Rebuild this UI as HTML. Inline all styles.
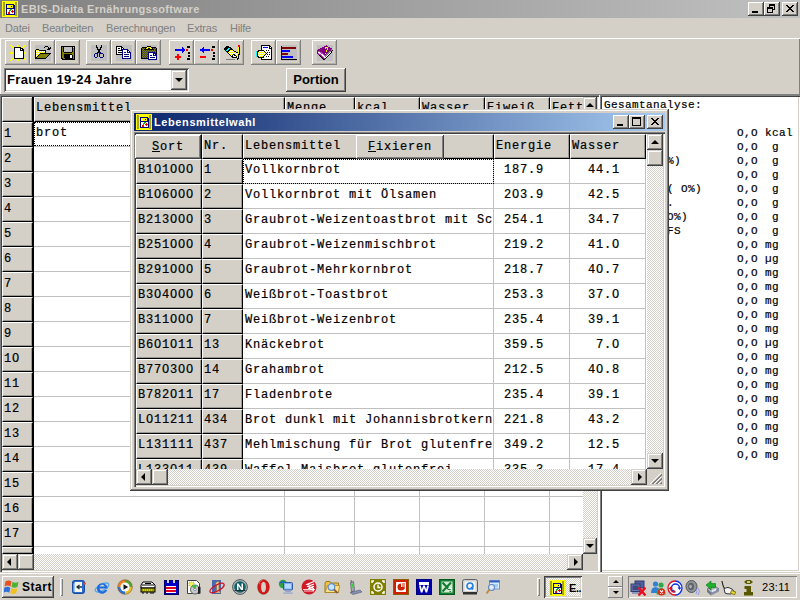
<!DOCTYPE html>
<html><head><meta charset="utf-8">
<style>
*{box-sizing:border-box;margin:0;padding:0}
html,body{width:800px;height:600px;overflow:hidden;background:#d4d0c8;font-family:"Liberation Sans",sans-serif;font-size:11px;color:#000}
.a{position:absolute}
#root{position:relative;width:800px;height:600px;overflow:hidden;background:#d4d0c8}
.m{position:absolute;font-family:"Liberation Mono",monospace;font-size:12px;letter-spacing:0.8px;white-space:pre;line-height:16px;-webkit-text-stroke:0.2px #000}
.m12{position:absolute;font-family:"Liberation Mono",monospace;font-size:11px;white-space:pre;line-height:14px;letter-spacing:0.4px;-webkit-text-stroke:0.2px #000}
.raised{background:#d4d0c8;box-shadow:inset -1px -1px 0 #404040,inset 1px 1px 0 #fff,inset -2px -2px 0 #808080,inset 2px 2px 0 #d4d0c8}
.sunken{box-shadow:inset 1px 1px 0 #808080,inset -1px -1px 0 #fff,inset 2px 2px 0 #404040,inset -2px -2px 0 #d4d0c8}
.tb{position:absolute;top:40px;width:25px;height:25px;background:#d4d0c8;box-shadow:inset -1px -1px 0 #808080,inset 1px 1px 0 #fff,inset -2px -2px 0 #b4b0a8}
.chk{background-color:#fff;background-image:linear-gradient(45deg,#d4d0c8 25%,transparent 25%,transparent 75%,#d4d0c8 75%),linear-gradient(45deg,#d4d0c8 25%,transparent 25%,transparent 75%,#d4d0c8 75%);background-size:2px 2px;background-position:0 0,1px 1px}
.sb{position:absolute;width:16px;height:16px;background:#d4d0c8;box-shadow:inset -1px -1px 0 #404040,inset 1px 1px 0 #d4d0c8,inset -2px -2px 0 #808080,inset 2px 2px 0 #fff}
.fx{position:absolute;background:#d4d0c8;border-top:1px solid #fff;border-left:1px solid #fff;border-bottom:1px solid #000;border-right:1px solid #000;box-shadow:inset -1px -1px 0 #9c9a94}
.hl{position:absolute;height:1px;background:#c0c0c0}
.vl{position:absolute;width:1px;background:#c0c0c0}
.ar{position:absolute;width:0;height:0;border:4px solid transparent}
</style></head><body><div id="root">
<div class="a" style="left:0;top:0;width:800px;height:18px;background:linear-gradient(90deg,#808080,#c0c0c0)"></div>
<div class="a" id="mtitle" style="left:21px;top:3px;font-weight:bold;font-size:11px;color:#d4d0c8;white-space:pre;line-height:13px;letter-spacing:0.31px">EBIS-Diaita Ernährungssoftware</div>
<svg class="a" style="left:2px;top:1px" width="16" height="16" viewBox="0 0 16 16" shape-rendering="crispEdges"><path fill="#ff0" d="M0 0h16v1h-16zM0 1h1v1h-1zM3 1h10v1h-10zM15 1h1v1h-1zM0 2h1v1h-1zM3 2h10v1h-10zM15 2h1v1h-1zM0 3h1v1h-1zM3 3h1v1h-1zM12 3h1v1h-1zM15 3h1v1h-1zM0 4h1v1h-1zM3 4h1v1h-1zM5 4h6v1h-6zM15 4h1v1h-1zM0 5h1v1h-1zM3 5h1v1h-1zM5 5h4v1h-4zM10 5h1v1h-1zM15 5h1v1h-1zM0 6h1v1h-1zM3 6h1v1h-1zM5 6h6v1h-6zM15 6h1v1h-1zM0 7h1v1h-1zM3 7h1v1h-1zM15 7h1v1h-1zM0 8h1v1h-1zM3 8h1v1h-1zM15 8h1v1h-1zM0 9h1v1h-1zM3 9h1v1h-1zM15 9h1v1h-1zM0 10h1v1h-1zM3 10h1v1h-1zM15 10h1v1h-1zM0 11h1v1h-1zM3 11h1v1h-1zM15 11h1v1h-1zM0 12h1v1h-1zM3 12h1v1h-1zM15 12h1v1h-1zM0 13h1v1h-1zM3 13h1v1h-1zM15 13h1v1h-1zM0 14h1v1h-1zM3 14h10v1h-10zM15 14h1v1h-1zM0 15h16v1h-16z"/><path fill="#a4a418" d="M1 1h2v1h-2zM13 1h2v1h-2zM1 2h2v1h-2zM13 2h2v1h-2zM1 3h2v1h-2zM13 3h2v1h-2zM1 4h2v1h-2zM13 4h2v1h-2zM1 5h2v1h-2zM13 5h2v1h-2zM1 6h2v1h-2zM13 6h2v1h-2zM1 7h2v1h-2zM13 7h2v1h-2zM1 8h2v1h-2zM13 8h2v1h-2zM1 9h2v1h-2zM13 9h2v1h-2zM1 10h2v1h-2zM13 10h2v1h-2zM1 11h2v1h-2zM13 11h2v1h-2zM1 12h2v1h-2zM13 12h2v1h-2zM1 13h2v1h-2zM13 13h2v1h-2zM1 14h2v1h-2zM13 14h2v1h-2z"/><path fill="#000080" d="M4 3h8v1h-8zM4 4h1v1h-1zM11 4h2v1h-2zM4 5h1v1h-1zM9 5h1v1h-1zM11 5h2v1h-2zM4 6h1v1h-1zM11 6h2v1h-2zM4 7h9v1h-9zM4 8h1v1h-1zM12 8h1v1h-1zM4 9h1v1h-1zM12 9h1v1h-1zM4 10h1v1h-1zM12 10h1v1h-1zM4 11h1v1h-1zM12 11h1v1h-1zM4 12h1v1h-1zM12 12h1v1h-1zM4 13h9v1h-9z"/><path fill="#fff" d="M5 8h3v1h-3zM10 8h2v1h-2zM5 9h2v1h-2zM9 9h1v1h-1zM11 9h1v1h-1zM5 10h2v1h-2zM8 10h1v1h-1zM5 11h1v1h-1zM8 11h2v1h-2zM11 11h1v1h-1zM5 12h1v1h-1zM8 12h4v1h-4z"/><path fill="#00c000" d="M8 8h2v1h-2zM7 9h2v1h-2zM7 10h1v1h-1z"/><path fill="#f00" d="M10 9h1v1h-1zM9 10h3v1h-3zM6 11h2v1h-2zM10 11h1v1h-1zM6 12h2v1h-2z"/></svg>
<div class="a raised" style="left:748px;top:2px;width:16px;height:14px"></div><div class="a" style="left:752px;top:11px;width:6px;height:2px;background:#000"></div>
<div class="a raised" style="left:764px;top:2px;width:16px;height:14px"></div><div class="a" style="left:769px;top:4px;width:6px;height:6px;border:1px solid #000;border-top-width:2px"></div><div class="a" style="left:767px;top:7px;width:6px;height:6px;border:1px solid #000;border-top-width:2px;background:#d4d0c8"></div>
<div class="a raised" style="left:782px;top:2px;width:16px;height:14px"></div><svg class="a" style="left:786px;top:5px" width="8" height="7" viewBox="0 0 8 7" shape-rendering="crispEdges"><path d="M0 0h2v1h1v1h2v-1h1v-1h2v1h-1v1h-1v1h-1v1h1v1h1v1h1v1h-2v-1h-1v-1h-2v1h-1v1h-2v-1h1v-1h1v-1h1v-1h-1v-1h-1v-1h-1z" fill="#000"/></svg>
<div class="a" style="left:5px;top:21px;line-height:14px;color:#808080;white-space:pre;font-size:11px;letter-spacing:-0.2px">Datei</div>
<div class="a" style="left:42px;top:21px;line-height:14px;color:#808080;white-space:pre;font-size:11px;letter-spacing:-0.2px">Bearbeiten</div>
<div class="a" style="left:106px;top:21px;line-height:14px;color:#808080;white-space:pre;font-size:11px;letter-spacing:-0.2px">Berechnungen</div>
<div class="a" style="left:187px;top:21px;line-height:14px;color:#808080;white-space:pre;font-size:11px;letter-spacing:-0.2px">Extras</div>
<div class="a" style="left:230px;top:21px;line-height:14px;color:#808080;white-space:pre;font-size:11px;letter-spacing:-0.2px">Hilfe</div>
<div class="a" style="left:0;top:38px;width:800px;height:1px;background:#fff"></div>
<div class="a" style="left:0;top:38px;width:1px;height:56px;background:#fff"></div>
<div class="tb" style="left:5px"></div>
<svg class="a" style="left:10px;top:45px" width="16" height="16" viewBox="0 0 16 16" shape-rendering="crispEdges"><path fill="#ff0" d="M0 0h2v1h-2zM7 0h2v1h-2zM14 0h2v1h-2zM1 1h2v1h-2zM7 1h2v1h-2zM13 1h2v1h-2zM2 2h2v1h-2zM12 2h2v1h-2zM3 3h1v1h-1zM0 7h3v1h-3zM14 7h2v1h-2zM0 8h3v1h-3zM14 8h2v1h-2zM2 13h2v1h-2zM14 13h2v1h-2zM1 14h2v1h-2zM7 14h2v1h-2zM14 14h2v1h-2zM0 15h2v1h-2zM7 15h2v1h-2z"/><path fill="#000" d="M4 2h7v1h-7zM4 3h1v1h-1zM10 3h3v1h-3zM4 4h1v1h-1zM10 4h1v1h-1zM12 4h2v1h-2zM4 5h1v1h-1zM10 5h4v1h-4zM4 6h1v1h-1zM13 6h1v1h-1zM4 7h1v1h-1zM13 7h1v1h-1zM4 8h1v1h-1zM13 8h1v1h-1zM4 9h1v1h-1zM13 9h1v1h-1zM4 10h1v1h-1zM13 10h1v1h-1zM4 11h1v1h-1zM13 11h1v1h-1zM4 12h1v1h-1zM13 12h1v1h-1zM4 13h10v1h-10z"/><path fill="#fff" d="M5 3h5v1h-5zM5 4h5v1h-5zM11 4h1v1h-1zM5 5h5v1h-5zM5 6h8v1h-8zM5 7h8v1h-8zM5 8h8v1h-8zM5 9h8v1h-8zM5 10h8v1h-8zM5 11h8v1h-8zM5 12h8v1h-8z"/></svg>
<div class="tb" style="left:30px"></div>
<svg class="a" style="left:35px;top:45px" width="16" height="16" viewBox="0 0 16 16" shape-rendering="crispEdges"><path fill="#c0c0c0" d="M0 0h16v1h-16zM0 1h10v1h-10zM13 1h3v1h-3zM0 2h9v1h-9zM10 2h3v1h-3zM14 2h1v1h-1zM0 3h13v1h-13zM0 4h1v1h-1zM4 4h8v1h-8zM15 4h1v1h-1zM11 5h5v1h-5zM11 6h5v1h-5zM11 7h5v1h-5zM15 9h1v1h-1zM14 10h2v1h-2zM13 11h3v1h-3zM12 12h4v1h-4zM11 13h5v1h-5zM0 14h16v1h-16zM0 15h16v1h-16z"/><path fill="#000" d="M10 1h3v1h-3zM9 2h1v1h-1zM13 2h1v1h-1zM15 2h1v1h-1zM13 3h3v1h-3zM1 4h3v1h-3zM12 4h3v1h-3zM0 5h1v1h-1zM4 5h7v1h-7zM0 6h1v1h-1zM10 6h1v1h-1zM0 7h1v1h-1zM10 7h1v1h-1zM0 8h1v1h-1zM5 8h11v1h-11zM0 9h1v1h-1zM4 9h1v1h-1zM14 9h1v1h-1zM0 10h1v1h-1zM3 10h1v1h-1zM13 10h1v1h-1zM0 11h1v1h-1zM2 11h1v1h-1zM12 11h1v1h-1zM0 12h2v1h-2zM11 12h1v1h-1zM0 13h11v1h-11z"/><path fill="#ff0" d="M1 5h1v1h-1zM3 5h1v1h-1zM2 6h1v1h-1zM4 6h1v1h-1zM6 6h1v1h-1zM8 6h1v1h-1zM1 7h1v1h-1zM3 7h1v1h-1zM5 7h1v1h-1zM7 7h1v1h-1zM9 7h1v1h-1zM2 8h1v1h-1zM4 8h1v1h-1zM1 9h1v1h-1zM3 9h1v1h-1zM2 10h1v1h-1zM1 11h1v1h-1z"/><path fill="#fff" d="M2 5h1v1h-1zM1 6h1v1h-1zM3 6h1v1h-1zM5 6h1v1h-1zM7 6h1v1h-1zM9 6h1v1h-1zM2 7h1v1h-1zM4 7h1v1h-1zM6 7h1v1h-1zM8 7h1v1h-1zM1 8h1v1h-1zM3 8h1v1h-1zM2 9h1v1h-1zM1 10h1v1h-1z"/><path fill="#808000" d="M5 9h9v1h-9zM4 10h9v1h-9zM3 11h9v1h-9zM2 12h9v1h-9z"/></svg>
<div class="tb" style="left:55px"></div>
<svg class="a" style="left:60px;top:45px" width="16" height="16" viewBox="0 0 16 16" shape-rendering="crispEdges"><path fill="#000" d="M1 1h14v1h-14zM1 2h1v1h-1zM3 2h1v1h-1zM12 2h1v1h-1zM14 2h1v1h-1zM1 3h1v1h-1zM3 3h1v1h-1zM12 3h1v1h-1zM14 3h1v1h-1zM1 4h1v1h-1zM3 4h1v1h-1zM12 4h1v1h-1zM14 4h1v1h-1zM1 5h1v1h-1zM3 5h1v1h-1zM12 5h1v1h-1zM14 5h1v1h-1zM1 6h1v1h-1zM3 6h1v1h-1zM12 6h1v1h-1zM14 6h1v1h-1zM1 7h1v1h-1zM4 7h8v1h-8zM14 7h1v1h-1zM1 8h1v1h-1zM14 8h1v1h-1zM1 9h1v1h-1zM4 9h8v1h-8zM14 9h1v1h-1zM1 10h1v1h-1zM4 10h6v1h-6zM12 10h1v1h-1zM14 10h1v1h-1zM1 11h1v1h-1zM4 11h6v1h-6zM12 11h1v1h-1zM14 11h1v1h-1zM1 12h1v1h-1zM4 12h6v1h-6zM12 12h1v1h-1zM14 12h1v1h-1zM1 13h2v1h-2zM5 13h8v1h-8zM14 13h1v1h-1zM2 14h13v1h-13z"/><path fill="#808000" d="M2 2h1v1h-1zM2 3h1v1h-1zM13 3h1v1h-1zM2 4h1v1h-1zM13 4h1v1h-1zM2 5h1v1h-1zM13 5h1v1h-1zM2 6h1v1h-1zM13 6h1v1h-1zM2 7h2v1h-2zM12 7h2v1h-2zM2 8h12v1h-12zM2 9h2v1h-2zM12 9h2v1h-2zM2 10h2v1h-2zM13 10h1v1h-1zM2 11h2v1h-2zM13 11h1v1h-1zM2 12h2v1h-2zM13 12h1v1h-1zM3 13h2v1h-2zM13 13h1v1h-1z"/><path fill="#c0c0c0" d="M4 2h8v1h-8zM13 2h1v1h-1zM4 3h8v1h-8zM4 4h8v1h-8zM4 5h8v1h-8zM4 6h8v1h-8z"/><path fill="#fff" d="M10 10h2v1h-2zM10 11h2v1h-2zM10 12h2v1h-2z"/></svg>
<div class="tb" style="left:86px"></div>
<svg class="a" style="left:91px;top:45px" width="16" height="16" viewBox="0 0 16 16" shape-rendering="crispEdges"><path fill="#c0c0c0" d="M0 0h5v1h-5zM6 0h4v1h-4zM11 0h5v1h-5zM0 1h5v1h-5zM6 1h4v1h-4zM11 1h5v1h-5zM0 2h5v1h-5zM7 2h2v1h-2zM11 2h5v1h-5zM0 3h6v1h-6zM7 3h2v1h-2zM10 3h6v1h-6zM0 4h6v1h-6zM10 4h6v1h-6zM0 5h7v1h-7zM9 5h7v1h-7zM0 6h7v1h-7zM9 6h7v1h-7zM0 7h6v1h-6zM10 7h6v1h-6zM0 8h4v1h-4zM7 8h1v1h-1zM12 8h4v1h-4zM0 9h3v1h-3zM4 9h2v1h-2zM7 9h1v1h-1zM9 9h3v1h-3zM13 9h3v1h-3zM0 10h3v1h-3zM4 10h2v1h-2zM7 10h1v1h-1zM9 10h3v1h-3zM13 10h3v1h-3zM0 11h3v1h-3zM4 11h2v1h-2zM7 11h1v1h-1zM9 11h3v1h-3zM13 11h3v1h-3zM0 12h4v1h-4zM6 12h3v1h-3zM12 12h4v1h-4zM0 13h16v1h-16zM0 14h16v1h-16zM0 15h16v1h-16z"/><path fill="#000" d="M5 0h1v1h-1zM10 0h1v1h-1zM5 1h1v1h-1zM10 1h1v1h-1zM5 2h2v1h-2zM9 2h2v1h-2zM6 3h1v1h-1zM9 3h1v1h-1zM6 4h4v1h-4zM7 5h2v1h-2zM7 6h2v1h-2zM7 7h1v1h-1z"/><path fill="#000080" d="M6 7h1v1h-1zM8 7h2v1h-2zM4 8h3v1h-3zM8 8h4v1h-4zM3 9h1v1h-1zM6 9h1v1h-1zM8 9h1v1h-1zM12 9h1v1h-1zM3 10h1v1h-1zM6 10h1v1h-1zM8 10h1v1h-1zM12 10h1v1h-1zM3 11h1v1h-1zM6 11h1v1h-1zM8 11h1v1h-1zM12 11h1v1h-1zM4 12h2v1h-2zM9 12h3v1h-3z"/></svg>
<div class="tb" style="left:111px"></div>
<svg class="a" style="left:116px;top:45px" width="16" height="16" viewBox="0 0 16 16" shape-rendering="crispEdges"><path fill="#c0c0c0" d="M0 0h16v1h-16zM6 1h10v1h-10zM7 2h9v1h-9zM8 3h8v1h-8zM12 4h4v1h-4zM13 5h3v1h-3zM14 6h2v1h-2zM15 7h1v1h-1zM15 8h1v1h-1zM15 9h1v1h-1zM0 10h6v1h-6zM15 10h1v1h-1zM0 11h6v1h-6zM15 11h1v1h-1zM0 12h6v1h-6zM15 12h1v1h-1zM0 13h6v1h-6zM15 13h1v1h-1zM0 14h16v1h-16zM0 15h16v1h-16z"/><path fill="#000" d="M0 1h6v1h-6zM0 2h1v1h-1zM5 2h2v1h-2zM0 3h1v1h-1zM2 3h2v1h-2zM5 3h1v1h-1zM7 3h1v1h-1zM0 4h1v1h-1zM5 4h1v1h-1zM0 5h1v1h-1zM2 5h4v1h-4zM0 6h1v1h-1zM0 7h1v1h-1zM2 7h4v1h-4zM0 8h1v1h-1zM0 9h6v1h-6z"/><path fill="#fff" d="M1 2h4v1h-4zM1 3h1v1h-1zM4 3h1v1h-1zM6 3h1v1h-1zM1 4h4v1h-4zM1 5h1v1h-1zM7 5h4v1h-4zM1 6h5v1h-5zM7 6h4v1h-4zM12 6h1v1h-1zM1 7h1v1h-1zM7 7h1v1h-1zM10 7h1v1h-1zM1 8h5v1h-5zM7 8h7v1h-7zM7 9h1v1h-1zM13 9h1v1h-1zM7 10h7v1h-7zM7 11h1v1h-1zM13 11h1v1h-1zM7 12h7v1h-7z"/><path fill="#000080" d="M6 4h6v1h-6zM6 5h1v1h-1zM11 5h2v1h-2zM6 6h1v1h-1zM11 6h1v1h-1zM13 6h1v1h-1zM6 7h1v1h-1zM8 7h2v1h-2zM11 7h4v1h-4zM6 8h1v1h-1zM14 8h1v1h-1zM6 9h1v1h-1zM8 9h5v1h-5zM14 9h1v1h-1zM6 10h1v1h-1zM14 10h1v1h-1zM6 11h1v1h-1zM8 11h5v1h-5zM14 11h1v1h-1zM6 12h1v1h-1zM14 12h1v1h-1zM6 13h9v1h-9z"/></svg>
<div class="tb" style="left:136px"></div>
<svg class="a" style="left:141px;top:45px" width="16" height="16" viewBox="0 0 16 16" shape-rendering="crispEdges"><path fill="#c0c0c0" d="M0 0h16v1h-16zM0 1h6v1h-6zM10 1h6v1h-6zM0 2h1v1h-1zM15 2h1v1h-1zM0 14h7v1h-7zM0 15h16v1h-16z"/><path fill="#000" d="M6 1h4v1h-4zM1 2h5v1h-5zM10 2h5v1h-5zM0 3h1v1h-1zM4 3h1v1h-1zM7 3h2v1h-2zM11 3h1v1h-1zM15 3h1v1h-1zM0 4h1v1h-1zM3 4h10v1h-10zM15 4h1v1h-1zM0 5h1v1h-1zM15 5h1v1h-1zM0 6h1v1h-1zM15 6h1v1h-1zM0 7h1v1h-1zM15 7h1v1h-1zM0 8h1v1h-1zM15 8h1v1h-1zM0 9h1v1h-1zM0 10h1v1h-1zM0 11h1v1h-1zM0 12h1v1h-1zM0 13h7v1h-7z"/><path fill="#ff0" d="M6 2h4v1h-4zM5 3h2v1h-2zM9 3h2v1h-2z"/><path fill="#808000" d="M1 3h1v1h-1zM3 3h1v1h-1zM12 3h1v1h-1zM14 3h1v1h-1zM2 4h1v1h-1zM13 4h1v1h-1zM1 5h1v1h-1zM3 5h1v1h-1zM5 5h1v1h-1zM7 5h1v1h-1zM9 5h1v1h-1zM11 5h1v1h-1zM13 5h1v1h-1zM2 6h1v1h-1zM4 6h1v1h-1zM6 6h1v1h-1zM8 6h1v1h-1zM10 6h1v1h-1zM12 6h1v1h-1zM14 6h1v1h-1zM1 7h1v1h-1zM3 7h1v1h-1zM5 7h1v1h-1zM2 8h1v1h-1zM4 8h1v1h-1zM6 8h1v1h-1zM1 9h1v1h-1zM3 9h1v1h-1zM5 9h1v1h-1zM2 10h1v1h-1zM4 10h1v1h-1zM6 10h1v1h-1zM1 11h1v1h-1zM3 11h1v1h-1zM5 11h1v1h-1zM2 12h1v1h-1zM4 12h1v1h-1zM6 12h1v1h-1z"/><path fill="#404040" d="M2 3h1v1h-1zM13 3h1v1h-1zM1 4h1v1h-1zM14 4h1v1h-1zM2 5h1v1h-1zM4 5h1v1h-1zM6 5h1v1h-1zM8 5h1v1h-1zM10 5h1v1h-1zM12 5h1v1h-1zM14 5h1v1h-1zM1 6h1v1h-1zM3 6h1v1h-1zM5 6h1v1h-1zM7 6h1v1h-1zM9 6h1v1h-1zM11 6h1v1h-1zM13 6h1v1h-1zM2 7h1v1h-1zM4 7h1v1h-1zM6 7h1v1h-1zM14 7h1v1h-1zM1 8h1v1h-1zM3 8h1v1h-1zM5 8h1v1h-1zM2 9h1v1h-1zM4 9h1v1h-1zM6 9h1v1h-1zM1 10h1v1h-1zM3 10h1v1h-1zM5 10h1v1h-1zM2 11h1v1h-1zM4 11h1v1h-1zM6 11h1v1h-1zM1 12h1v1h-1zM3 12h1v1h-1zM5 12h1v1h-1z"/><path fill="#000080" d="M7 7h7v1h-7zM7 8h1v1h-1zM12 8h3v1h-3zM7 9h1v1h-1zM12 9h1v1h-1zM14 9h2v1h-2zM7 10h1v1h-1zM9 10h2v1h-2zM12 10h4v1h-4zM7 11h1v1h-1zM15 11h1v1h-1zM7 12h1v1h-1zM9 12h5v1h-5zM15 12h1v1h-1zM7 13h1v1h-1zM15 13h1v1h-1zM7 14h9v1h-9z"/><path fill="#fff" d="M8 8h4v1h-4zM8 9h4v1h-4zM13 9h1v1h-1zM8 10h1v1h-1zM11 10h1v1h-1zM8 11h7v1h-7zM8 12h1v1h-1zM14 12h1v1h-1zM8 13h7v1h-7z"/></svg>
<div class="tb" style="left:169px"></div>
<svg class="a" style="left:174px;top:45px" width="16" height="16" viewBox="0 0 16 16" shape-rendering="crispEdges"><path fill="#000" d="M13 1h3v1h-3zM13 2h3v1h-3zM14 7h2v1h-2zM14 8h2v1h-2zM14 10h2v1h-2zM14 11h2v1h-2zM13 13h3v1h-3zM13 14h3v1h-3z"/><path fill="#00f" d="M8 2h1v1h-1zM8 3h2v1h-2zM1 4h10v1h-10zM1 5h10v1h-10zM8 6h2v1h-2zM8 7h1v1h-1z"/><path fill="#f00" d="M12 4h2v1h-2zM12 5h2v1h-2zM3 9h2v1h-2zM3 10h2v1h-2zM1 11h6v1h-6zM1 12h6v1h-6zM3 13h2v1h-2zM3 14h2v1h-2z"/></svg>
<div class="tb" style="left:194px"></div>
<svg class="a" style="left:199px;top:45px" width="16" height="16" viewBox="0 0 16 16" shape-rendering="crispEdges"><path fill="#000" d="M13 1h3v1h-3zM13 2h3v1h-3zM14 7h2v1h-2zM14 8h2v1h-2zM14 10h2v1h-2zM14 11h2v1h-2zM13 13h3v1h-3zM13 14h3v1h-3z"/><path fill="#00f" d="M4 2h1v1h-1zM3 3h2v1h-2zM1 4h10v1h-10zM1 5h10v1h-10zM3 6h2v1h-2zM4 7h1v1h-1z"/><path fill="#f00" d="M12 4h2v1h-2zM12 5h2v1h-2zM1 11h6v1h-6zM1 12h6v1h-6z"/></svg>
<div class="tb" style="left:219px"></div>
<svg class="a" style="left:224px;top:45px" width="16" height="16" viewBox="0 0 16 16" shape-rendering="crispEdges"><path fill="#f00" d="M14 0h2v1h-2zM14 1h2v1h-2z"/><path fill="#000" d="M2 1h3v1h-3zM1 2h6v1h-6zM15 2h1v1h-1zM0 3h4v1h-4zM6 3h2v1h-2zM15 3h1v1h-1zM0 4h3v1h-3zM5 4h4v1h-4zM15 4h1v1h-1zM1 5h1v1h-1zM4 5h2v1h-2zM9 5h1v1h-1zM15 5h1v1h-1zM2 6h3v1h-3zM10 6h2v1h-2zM15 6h1v1h-1zM3 7h1v1h-1zM12 7h2v1h-2zM15 7h1v1h-1zM4 8h1v1h-1zM15 8h1v1h-1zM5 9h1v1h-1zM9 9h2v1h-2zM14 9h2v1h-2zM6 10h1v1h-1zM8 10h1v1h-1zM10 10h2v1h-2zM14 10h1v1h-1zM7 11h2v1h-2zM12 11h1v1h-1zM14 11h1v1h-1zM8 12h5v1h-5zM14 12h1v1h-1zM13 13h2v1h-2zM13 14h1v1h-1z"/><path fill="#ff0" d="M14 2h1v1h-1zM14 3h1v1h-1zM14 4h1v1h-1zM6 5h1v1h-1zM8 5h1v1h-1zM14 5h1v1h-1zM5 6h1v1h-1zM7 6h1v1h-1zM9 6h1v1h-1zM14 6h1v1h-1zM4 7h1v1h-1zM6 7h1v1h-1zM8 7h1v1h-1zM10 7h2v1h-2zM14 7h1v1h-1zM5 8h1v1h-1zM7 8h1v1h-1zM9 8h1v1h-1zM11 8h1v1h-1zM13 8h2v1h-2zM6 9h1v1h-1zM8 9h1v1h-1zM11 9h1v1h-1zM13 9h1v1h-1zM7 10h1v1h-1zM12 10h2v1h-2zM9 11h1v1h-1zM13 11h1v1h-1zM13 12h1v1h-1z"/><path fill="#0ff" d="M4 3h2v1h-2zM3 4h2v1h-2zM2 5h2v1h-2z"/><path fill="#fff" d="M7 5h1v1h-1zM6 6h1v1h-1zM8 6h1v1h-1zM5 7h1v1h-1zM7 7h1v1h-1zM9 7h1v1h-1zM6 8h1v1h-1zM8 8h1v1h-1zM10 8h1v1h-1zM12 8h1v1h-1zM7 9h1v1h-1zM12 9h1v1h-1zM9 10h1v1h-1zM10 11h2v1h-2z"/><path fill="#808080" d="M2 14h9v1h-9z"/></svg>
<div class="tb" style="left:251px"></div>
<svg class="a" style="left:256px;top:45px" width="16" height="16" viewBox="0 0 16 16" shape-rendering="crispEdges"><path fill="#000" d="M5 0h9v1h-9zM5 1h1v1h-1zM13 1h2v1h-2zM5 2h1v1h-1zM13 2h1v1h-1zM15 2h1v1h-1zM5 3h1v1h-1zM13 3h3v1h-3zM5 4h1v1h-1zM15 4h1v1h-1zM2 5h6v1h-6zM10 5h1v1h-1zM12 5h1v1h-1zM15 5h1v1h-1zM1 6h2v1h-2zM8 6h1v1h-1zM15 6h1v1h-1zM1 7h1v1h-1zM9 7h1v1h-1zM11 7h1v1h-1zM13 7h1v1h-1zM15 7h1v1h-1zM1 8h1v1h-1zM10 8h1v1h-1zM15 8h1v1h-1zM1 9h1v1h-1zM9 9h1v1h-1zM11 9h1v1h-1zM13 9h1v1h-1zM15 9h1v1h-1zM1 10h1v1h-1zM8 10h1v1h-1zM15 10h1v1h-1zM1 11h2v1h-2zM7 11h1v1h-1zM10 11h1v1h-1zM12 11h1v1h-1zM15 11h1v1h-1zM2 12h6v1h-6zM15 12h1v1h-1zM5 13h1v1h-1zM15 13h1v1h-1zM5 14h11v1h-11z"/><path fill="#fff" d="M6 1h7v1h-7zM6 2h1v1h-1zM12 2h1v1h-1zM14 2h1v1h-1zM6 3h7v1h-7zM6 4h9v1h-9zM8 5h2v1h-2zM11 5h1v1h-1zM13 5h2v1h-2zM4 6h1v1h-1zM6 6h1v1h-1zM9 6h6v1h-6zM3 7h1v1h-1zM5 7h1v1h-1zM7 7h1v1h-1zM10 7h1v1h-1zM12 7h1v1h-1zM14 7h1v1h-1zM2 8h1v1h-1zM4 8h1v1h-1zM6 8h1v1h-1zM8 8h1v1h-1zM11 8h4v1h-4zM3 9h1v1h-1zM5 9h1v1h-1zM7 9h1v1h-1zM10 9h1v1h-1zM12 9h1v1h-1zM14 9h1v1h-1zM2 10h1v1h-1zM4 10h1v1h-1zM6 10h1v1h-1zM9 10h6v1h-6zM3 11h1v1h-1zM5 11h1v1h-1zM8 11h2v1h-2zM11 11h1v1h-1zM13 11h2v1h-2zM8 12h7v1h-7zM6 13h9v1h-9z"/><path fill="#00f" d="M7 2h5v1h-5z"/><path fill="#0ff" d="M0 6h1v1h-1zM0 7h1v1h-1zM0 8h1v1h-1zM0 9h1v1h-1zM0 10h1v1h-1zM0 11h1v1h-1z"/><path fill="#ff0" d="M3 6h1v1h-1zM5 6h1v1h-1zM7 6h1v1h-1zM2 7h1v1h-1zM4 7h1v1h-1zM6 7h1v1h-1zM8 7h1v1h-1zM3 8h1v1h-1zM5 8h1v1h-1zM7 8h1v1h-1zM9 8h1v1h-1zM2 9h1v1h-1zM4 9h1v1h-1zM6 9h1v1h-1zM8 9h1v1h-1zM3 10h1v1h-1zM5 10h1v1h-1zM7 10h1v1h-1zM4 11h1v1h-1zM6 11h1v1h-1z"/></svg>
<div class="tb" style="left:276px"></div>
<svg class="a" style="left:281px;top:45px" width="16" height="16" viewBox="0 0 16 16" shape-rendering="crispEdges"><path fill="#c0c0c0" d="M0 0h16v1h-16zM1 1h15v1h-15zM15 2h1v1h-1zM15 3h1v1h-1zM1 4h15v1h-15zM9 5h7v1h-7zM9 6h7v1h-7zM1 7h15v1h-15zM7 8h9v1h-9zM7 9h9v1h-9zM1 10h15v1h-15zM12 11h4v1h-4zM12 12h4v1h-4zM1 13h15v1h-15zM0 15h16v1h-16z"/><path fill="#000" d="M0 1h1v1h-1zM0 2h1v1h-1zM0 3h1v1h-1zM0 4h1v1h-1zM0 5h1v1h-1zM0 6h1v1h-1zM0 7h1v1h-1zM0 8h1v1h-1zM0 9h1v1h-1zM0 10h1v1h-1zM0 11h1v1h-1zM0 12h1v1h-1zM0 13h1v1h-1zM0 14h16v1h-16z"/><path fill="#800000" d="M1 2h14v1h-14zM1 3h14v1h-14zM1 8h6v1h-6zM1 9h6v1h-6z"/><path fill="#00f" d="M1 5h8v1h-8zM1 6h8v1h-8zM1 11h11v1h-11zM1 12h11v1h-11z"/></svg>
<div class="tb" style="left:312px"></div>
<svg class="a" style="left:317px;top:45px" width="16" height="16" viewBox="0 0 16 16" shape-rendering="crispEdges"><path fill="#c0c0c0" d="M0 0h9v1h-9zM10 0h6v1h-6zM0 1h7v1h-7zM11 1h5v1h-5zM0 2h5v1h-5zM13 2h3v1h-3zM0 3h3v1h-3zM15 3h1v1h-1zM0 4h1v1h-1zM15 4h1v1h-1zM15 6h1v1h-1zM15 7h1v1h-1zM14 8h2v1h-2zM0 9h1v1h-1zM13 9h3v1h-3zM0 10h2v1h-2zM12 10h4v1h-4zM0 11h3v1h-3zM11 11h5v1h-5zM0 12h4v1h-4zM10 12h6v1h-6zM0 13h5v1h-5zM9 13h7v1h-7zM0 14h6v1h-6zM8 14h8v1h-8zM0 15h16v1h-16z"/><path fill="#800080" d="M9 0h1v1h-1zM7 1h4v1h-4zM5 2h3v1h-3zM11 2h2v1h-2zM3 3h5v1h-5zM9 3h1v1h-1zM11 3h4v1h-4zM1 4h9v1h-9zM11 4h3v1h-3zM0 5h9v1h-9zM10 5h4v1h-4zM0 6h1v1h-1zM3 6h6v1h-6zM10 6h2v1h-2zM0 7h1v1h-1zM5 7h6v1h-6zM0 8h1v1h-1zM6 8h2v1h-2zM9 8h1v1h-1zM1 9h1v1h-1zM7 9h2v1h-2zM3 10h1v1h-1zM4 11h1v1h-1zM5 12h1v1h-1zM6 13h1v1h-1z"/><path fill="#ff0" d="M8 2h3v1h-3zM8 3h1v1h-1zM10 3h1v1h-1zM10 4h1v1h-1zM9 5h1v1h-1zM9 6h1v1h-1zM8 8h1v1h-1z"/><path fill="#808080" d="M14 4h1v1h-1zM14 5h1v1h-1zM12 6h2v1h-2zM11 7h2v1h-2zM10 8h2v1h-2zM9 9h2v1h-2zM8 10h2v1h-2zM8 11h1v1h-1z"/><path fill="#000" d="M15 5h1v1h-1zM14 6h1v1h-1zM14 7h1v1h-1zM13 8h1v1h-1zM12 9h1v1h-1zM2 10h1v1h-1zM11 10h1v1h-1zM3 11h1v1h-1zM10 11h1v1h-1zM4 12h1v1h-1zM9 12h1v1h-1zM5 13h1v1h-1zM8 13h1v1h-1zM6 14h2v1h-2z"/><path fill="#c040c0" d="M1 6h2v1h-2zM3 7h2v1h-2zM1 8h1v1h-1zM4 8h2v1h-2zM2 9h2v1h-2zM6 9h1v1h-1zM4 10h1v1h-1zM7 10h1v1h-1zM5 11h1v1h-1zM6 12h1v1h-1zM7 13h1v1h-1z"/><path fill="#fff" d="M1 7h2v1h-2zM13 7h1v1h-1zM2 8h2v1h-2zM12 8h1v1h-1zM4 9h2v1h-2zM11 9h1v1h-1zM5 10h2v1h-2zM10 10h1v1h-1zM6 11h2v1h-2zM9 11h1v1h-1zM7 12h2v1h-2z"/></svg>
<div class="a sunken" style="left:4px;top:68px;width:185px;height:24px;background:#fff"></div>
<div class="a" id="combotxt" style="left:7px;top:72px;font-weight:bold;font-size:13px;line-height:15px;white-space:pre;letter-spacing:0.36px">Frauen 19-24 Jahre</div>
<div class="sb" style="left:171px;top:70px;width:16px;height:20px"></div>
<div class="ar" style="left:175px;top:78px;border-top-color:#000;border-width:4px 4px 0 4px"></div>
<div class="a raised" style="left:286px;top:68px;width:60px;height:24px"></div>
<div class="a" id="portion" style="left:286px;top:72px;width:60px;text-align:center;font-weight:bold;font-size:13px;line-height:15px">Portion</div>
<div class="a" style="left:0;top:94px;width:800px;height:1px;background:#808080"></div>
<div class="a" style="left:0;top:95px;width:599px;height:477px;background:#fff;box-shadow:inset 1px 1px 0 #808080,inset 2px 2px 0 #404040,inset -1px -1px 0 #fff,inset -2px -2px 0 #d4d0c8"></div>
<div class="hl" style="left:34px;top:146px;width:549px"></div>
<div class="hl" style="left:34px;top:171px;width:549px"></div>
<div class="hl" style="left:34px;top:196px;width:549px"></div>
<div class="hl" style="left:34px;top:221px;width:549px"></div>
<div class="hl" style="left:34px;top:246px;width:549px"></div>
<div class="hl" style="left:34px;top:271px;width:549px"></div>
<div class="hl" style="left:34px;top:296px;width:549px"></div>
<div class="hl" style="left:34px;top:321px;width:549px"></div>
<div class="hl" style="left:34px;top:346px;width:549px"></div>
<div class="hl" style="left:34px;top:371px;width:549px"></div>
<div class="hl" style="left:34px;top:396px;width:549px"></div>
<div class="hl" style="left:34px;top:421px;width:549px"></div>
<div class="hl" style="left:34px;top:446px;width:549px"></div>
<div class="hl" style="left:34px;top:471px;width:549px"></div>
<div class="hl" style="left:34px;top:496px;width:549px"></div>
<div class="hl" style="left:34px;top:521px;width:549px"></div>
<div class="hl" style="left:34px;top:546px;width:549px"></div>
<div class="vl" style="left:284px;top:122px;height:432px"></div>
<div class="vl" style="left:354px;top:122px;height:432px"></div>
<div class="vl" style="left:419px;top:122px;height:432px"></div>
<div class="vl" style="left:484px;top:122px;height:432px"></div>
<div class="vl" style="left:549px;top:122px;height:432px"></div>
<div class="fx" style="left:2px;top:97px;width:31px;height:25px"></div>
<div class="a" style="left:32px;top:97px;width:2px;height:457px;background:#000"></div>
<div class="fx" style="left:34px;top:97px;width:251px;height:25px;overflow:hidden"><div class="m" style="left:1px;top:2px">Lebensmittel</div></div>
<div class="fx" style="left:285px;top:97px;width:70px;height:25px;overflow:hidden"><div class="m" style="left:1px;top:2px">Menge</div></div>
<div class="fx" style="left:355px;top:97px;width:65px;height:25px;overflow:hidden"><div class="m" style="left:1px;top:2px">kcal</div></div>
<div class="fx" style="left:420px;top:97px;width:65px;height:25px;overflow:hidden"><div class="m" style="left:1px;top:2px">Wasser</div></div>
<div class="fx" style="left:485px;top:97px;width:65px;height:25px;overflow:hidden"><div class="m" style="left:1px;top:2px">Eiweiß</div></div>
<div class="fx" style="left:550px;top:97px;width:33px;height:25px;overflow:hidden;border-right:0;box-shadow:inset 0 -1px 0 #9c9a94"><div class="m" style="left:1px;top:2px">Fett</div></div>
<div class="fx" style="left:2px;top:122px;width:31px;height:25px;overflow:hidden"><div class="m" style="left:1px;top:3px">1</div></div>
<div class="fx" style="left:2px;top:147px;width:31px;height:25px;overflow:hidden"><div class="m" style="left:1px;top:3px">2</div></div>
<div class="fx" style="left:2px;top:172px;width:31px;height:25px;overflow:hidden"><div class="m" style="left:1px;top:3px">3</div></div>
<div class="fx" style="left:2px;top:197px;width:31px;height:25px;overflow:hidden"><div class="m" style="left:1px;top:3px">4</div></div>
<div class="fx" style="left:2px;top:222px;width:31px;height:25px;overflow:hidden"><div class="m" style="left:1px;top:3px">5</div></div>
<div class="fx" style="left:2px;top:247px;width:31px;height:25px;overflow:hidden"><div class="m" style="left:1px;top:3px">6</div></div>
<div class="fx" style="left:2px;top:272px;width:31px;height:25px;overflow:hidden"><div class="m" style="left:1px;top:3px">7</div></div>
<div class="fx" style="left:2px;top:297px;width:31px;height:25px;overflow:hidden"><div class="m" style="left:1px;top:3px">8</div></div>
<div class="fx" style="left:2px;top:322px;width:31px;height:25px;overflow:hidden"><div class="m" style="left:1px;top:3px">9</div></div>
<div class="fx" style="left:2px;top:347px;width:31px;height:25px;overflow:hidden"><div class="m" style="left:1px;top:3px">1O</div></div>
<div class="fx" style="left:2px;top:372px;width:31px;height:25px;overflow:hidden"><div class="m" style="left:1px;top:3px">11</div></div>
<div class="fx" style="left:2px;top:397px;width:31px;height:25px;overflow:hidden"><div class="m" style="left:1px;top:3px">12</div></div>
<div class="fx" style="left:2px;top:422px;width:31px;height:25px;overflow:hidden"><div class="m" style="left:1px;top:3px">13</div></div>
<div class="fx" style="left:2px;top:447px;width:31px;height:25px;overflow:hidden"><div class="m" style="left:1px;top:3px">14</div></div>
<div class="fx" style="left:2px;top:472px;width:31px;height:25px;overflow:hidden"><div class="m" style="left:1px;top:3px">15</div></div>
<div class="fx" style="left:2px;top:497px;width:31px;height:25px;overflow:hidden"><div class="m" style="left:1px;top:3px">16</div></div>
<div class="fx" style="left:2px;top:522px;width:31px;height:25px;overflow:hidden"><div class="m" style="left:1px;top:3px">17</div></div>
<div class="fx" style="left:2px;top:547px;width:31px;height:7px;overflow:hidden"><div class="m" style="left:1px;top:3px">18</div></div>
<div class="m" style="left:36px;top:125px">brot</div>
<div class="a" style="left:34px;top:122px;width:250px;height:24px;border:1px dotted #000"></div>
<div class="a chk" style="left:583px;top:97px;width:14px;height:457px"></div>
<div class="a chk" style="left:2px;top:554px;width:581px;height:16px"></div>
<div class="a" style="left:583px;top:554px;width:14px;height:16px;background:#d4d0c8"></div>
<div class="sb" style="left:583px;top:97px;width:14px"></div><div class="ar" style="left:586px;top:103px;border-bottom-color:#000;border-width:0 4px 4px 4px"></div>
<div class="sb" style="left:583px;top:538px;width:14px"></div><div class="ar" style="left:586px;top:544px;border-top-color:#000;border-width:4px 4px 0 4px"></div>
<div class="sb" style="left:2px;top:554px"></div><div class="ar" style="left:7px;top:558px;border-right-color:#000;border-width:4px 4px 4px 0"></div>
<div class="sb" style="left:18px;top:554px"></div>
<div class="sb" style="left:567px;top:554px"></div><div class="ar" style="left:574px;top:558px;border-left-color:#000;border-width:4px 0 4px 4px"></div>
<div class="a" style="left:599px;top:95px;width:1px;height:477px;background:#fff"></div>
<div class="a" style="left:600px;top:95px;width:200px;height:477px;background:#fff;box-shadow:inset 1px 1px 0 #808080,inset 2px 2px 0 #404040,inset -1px -1px 0 #fff,inset -2px -2px 0 #d4d0c8"></div>
<div class="a" style="left:799px;top:39px;width:1px;height:55px;background:#808080"></div>
<div class="m12" id="rp" style="left:604px;top:98px">Gesamtanalyse:

Energie            O,O kcal
Wasser             O,O  g
Eiweiß (O%)        O,O  g
Fett               O,O  g
Kohlenhyd( O%)     O,O  g
Ballastst.         O,O  g
Alkohol (O%)       O,O  g
MUFS : PUFS        O,O  g
Cholester          O,O mg
Vitamin A          O,O µg
Vitamin E          O,O mg
Vitamin B          O,O mg
Vitamin B          O,O mg
Vitamin B          O,O mg
Vitamin C          O,O mg
Folsre             O,O µg
Natrium            O,O mg
Kalium             O,O mg
Calcium            O,O mg
Magnesium          O,O mg
Phosphor           O,O mg
Eisen              O,O mg
Zink               O,O mg
Jod                O,O mg</div>
<div class="a" style="left:130px;top:109px;width:539px;height:382px;background:#d4d0c8;box-shadow:inset -1px -1px 0 #404040,inset 1px 1px 0 #d4d0c8,inset -2px -2px 0 #808080,inset 2px 2px 0 #fff"></div>
<div class="a" style="left:134px;top:113px;width:531px;height:18px;background:linear-gradient(90deg,#0a246a,#a6caf0)"></div>
<svg class="a" style="left:136px;top:114px" width="16" height="16" viewBox="0 0 16 16" shape-rendering="crispEdges"><path fill="#ff0" d="M0 0h16v1h-16zM0 1h1v1h-1zM3 1h10v1h-10zM15 1h1v1h-1zM0 2h1v1h-1zM3 2h10v1h-10zM15 2h1v1h-1zM0 3h1v1h-1zM3 3h1v1h-1zM12 3h1v1h-1zM15 3h1v1h-1zM0 4h1v1h-1zM3 4h1v1h-1zM5 4h6v1h-6zM15 4h1v1h-1zM0 5h1v1h-1zM3 5h1v1h-1zM5 5h4v1h-4zM10 5h1v1h-1zM15 5h1v1h-1zM0 6h1v1h-1zM3 6h1v1h-1zM5 6h6v1h-6zM15 6h1v1h-1zM0 7h1v1h-1zM3 7h1v1h-1zM15 7h1v1h-1zM0 8h1v1h-1zM3 8h1v1h-1zM15 8h1v1h-1zM0 9h1v1h-1zM3 9h1v1h-1zM15 9h1v1h-1zM0 10h1v1h-1zM3 10h1v1h-1zM15 10h1v1h-1zM0 11h1v1h-1zM3 11h1v1h-1zM15 11h1v1h-1zM0 12h1v1h-1zM3 12h1v1h-1zM15 12h1v1h-1zM0 13h1v1h-1zM3 13h1v1h-1zM15 13h1v1h-1zM0 14h1v1h-1zM3 14h10v1h-10zM15 14h1v1h-1zM0 15h16v1h-16z"/><path fill="#a4a418" d="M1 1h2v1h-2zM13 1h2v1h-2zM1 2h2v1h-2zM13 2h2v1h-2zM1 3h2v1h-2zM13 3h2v1h-2zM1 4h2v1h-2zM13 4h2v1h-2zM1 5h2v1h-2zM13 5h2v1h-2zM1 6h2v1h-2zM13 6h2v1h-2zM1 7h2v1h-2zM13 7h2v1h-2zM1 8h2v1h-2zM13 8h2v1h-2zM1 9h2v1h-2zM13 9h2v1h-2zM1 10h2v1h-2zM13 10h2v1h-2zM1 11h2v1h-2zM13 11h2v1h-2zM1 12h2v1h-2zM13 12h2v1h-2zM1 13h2v1h-2zM13 13h2v1h-2zM1 14h2v1h-2zM13 14h2v1h-2z"/><path fill="#000080" d="M4 3h8v1h-8zM4 4h1v1h-1zM11 4h2v1h-2zM4 5h1v1h-1zM9 5h1v1h-1zM11 5h2v1h-2zM4 6h1v1h-1zM11 6h2v1h-2zM4 7h9v1h-9zM4 8h1v1h-1zM12 8h1v1h-1zM4 9h1v1h-1zM12 9h1v1h-1zM4 10h1v1h-1zM12 10h1v1h-1zM4 11h1v1h-1zM12 11h1v1h-1zM4 12h1v1h-1zM12 12h1v1h-1zM4 13h9v1h-9z"/><path fill="#fff" d="M5 8h3v1h-3zM10 8h2v1h-2zM5 9h2v1h-2zM9 9h1v1h-1zM11 9h1v1h-1zM5 10h2v1h-2zM8 10h1v1h-1zM5 11h1v1h-1zM8 11h2v1h-2zM11 11h1v1h-1zM5 12h1v1h-1zM8 12h4v1h-4z"/><path fill="#00c000" d="M8 8h2v1h-2zM7 9h2v1h-2zM7 10h1v1h-1z"/><path fill="#f00" d="M10 9h1v1h-1zM9 10h3v1h-3zM6 11h2v1h-2zM10 11h1v1h-1zM6 12h2v1h-2z"/></svg>
<div class="a" id="dtitle" style="left:154px;top:116px;font-weight:bold;font-size:11px;color:#fff;white-space:pre;line-height:13px;letter-spacing:0.6px">Lebensmittelwahl</div>
<div class="a raised" style="left:613px;top:115px;width:16px;height:14px"></div><div class="a" style="left:617px;top:124px;width:6px;height:2px;background:#000"></div>
<div class="a raised" style="left:629px;top:115px;width:16px;height:14px"></div><div class="a" style="left:632px;top:117px;width:9px;height:9px;border:1px solid #000;border-top-width:2px"></div>
<div class="a raised" style="left:647px;top:115px;width:16px;height:14px"></div><svg class="a" style="left:651px;top:118px" width="8" height="7" viewBox="0 0 8 7" shape-rendering="crispEdges"><path d="M0 0h2v1h1v1h2v-1h1v-1h2v1h-1v1h-1v1h-1v1h1v1h1v1h1v1h-2v-1h-1v-1h-2v1h-1v1h-2v-1h1v-1h1v-1h1v-1h-1v-1h-1v-1h-1z" fill="#000"/></svg>
<div class="a" style="left:134px;top:132px;width:531px;height:355px;background:#fff;box-shadow:inset 1px 1px 0 #808080,inset 2px 2px 0 #404040,inset -1px -1px 0 #fff,inset -2px -2px 0 #d4d0c8"></div>
<div class="a" style="left:136px;top:134px;width:511px;height:335px;overflow:hidden">
<div class="fx" style="left:0px;top:0;width:66px;height:25px"><div class="m" style="left:1px;top:3px"></div></div>
<div class="fx" style="left:66px;top:0;width:41px;height:25px"><div class="m" style="left:1px;top:3px">Nr.</div></div>
<div class="fx" style="left:107px;top:0;width:251px;height:25px"><div class="m" style="left:1px;top:3px">Lebensmittel</div></div>
<div class="fx" style="left:358px;top:0;width:76px;height:25px"><div class="m" style="left:1px;top:3px">Energie</div></div>
<div class="fx" style="left:434px;top:0;width:76px;height:25px"><div class="m" style="left:1px;top:3px">Wasser</div></div>
<div class="a" style="left:510px;top:0;width:1px;height:335px;background:#fff"></div>
<div class="fx" style="left:0px;top:25px;width:66px;height:25px"><div class="m" style="left:1px;top:2px">B1O1OOO</div></div>
<div class="fx" style="left:66px;top:25px;width:41px;height:25px"><div class="m" style="left:1px;top:2px">1</div></div>
<div class="hl" style="left:107px;top:49px;width:403px"></div>
<div class="m" style="left:109px;top:28px">Vollkornbrot</div>
<div class="m" style="left:358px;top:28px;width:50px;text-align:right;background:#fff">187.9</div>
<div class="m" style="left:434px;top:28px;width:50px;text-align:right">44.1</div>
<div class="fx" style="left:0px;top:50px;width:66px;height:25px"><div class="m" style="left:1px;top:2px">B1O6OOO</div></div>
<div class="fx" style="left:66px;top:50px;width:41px;height:25px"><div class="m" style="left:1px;top:2px">2</div></div>
<div class="hl" style="left:107px;top:74px;width:403px"></div>
<div class="m" style="left:109px;top:53px">Vollkornbrot mit Ölsamen</div>
<div class="m" style="left:358px;top:53px;width:50px;text-align:right;background:#fff">2O3.9</div>
<div class="m" style="left:434px;top:53px;width:50px;text-align:right">42.5</div>
<div class="fx" style="left:0px;top:75px;width:66px;height:25px"><div class="m" style="left:1px;top:2px">B213OOO</div></div>
<div class="fx" style="left:66px;top:75px;width:41px;height:25px"><div class="m" style="left:1px;top:2px">3</div></div>
<div class="hl" style="left:107px;top:99px;width:403px"></div>
<div class="m" style="left:109px;top:78px">Graubrot-Weizentoastbrot mit Sc</div>
<div class="m" style="left:358px;top:78px;width:50px;text-align:right;background:#fff">254.1</div>
<div class="m" style="left:434px;top:78px;width:50px;text-align:right">34.7</div>
<div class="fx" style="left:0px;top:100px;width:66px;height:25px"><div class="m" style="left:1px;top:2px">B251OOO</div></div>
<div class="fx" style="left:66px;top:100px;width:41px;height:25px"><div class="m" style="left:1px;top:2px">4</div></div>
<div class="hl" style="left:107px;top:124px;width:403px"></div>
<div class="m" style="left:109px;top:103px">Graubrot-Weizenmischbrot</div>
<div class="m" style="left:358px;top:103px;width:50px;text-align:right;background:#fff">219.2</div>
<div class="m" style="left:434px;top:103px;width:50px;text-align:right">41.O</div>
<div class="fx" style="left:0px;top:125px;width:66px;height:25px"><div class="m" style="left:1px;top:2px">B291OOO</div></div>
<div class="fx" style="left:66px;top:125px;width:41px;height:25px"><div class="m" style="left:1px;top:2px">5</div></div>
<div class="hl" style="left:107px;top:149px;width:403px"></div>
<div class="m" style="left:109px;top:128px">Graubrot-Mehrkornbrot</div>
<div class="m" style="left:358px;top:128px;width:50px;text-align:right;background:#fff">218.7</div>
<div class="m" style="left:434px;top:128px;width:50px;text-align:right">4O.7</div>
<div class="fx" style="left:0px;top:150px;width:66px;height:25px"><div class="m" style="left:1px;top:2px">B3O4OOO</div></div>
<div class="fx" style="left:66px;top:150px;width:41px;height:25px"><div class="m" style="left:1px;top:2px">6</div></div>
<div class="hl" style="left:107px;top:174px;width:403px"></div>
<div class="m" style="left:109px;top:153px">Weißbrot-Toastbrot</div>
<div class="m" style="left:358px;top:153px;width:50px;text-align:right;background:#fff">253.3</div>
<div class="m" style="left:434px;top:153px;width:50px;text-align:right">37.O</div>
<div class="fx" style="left:0px;top:175px;width:66px;height:25px"><div class="m" style="left:1px;top:2px">B311OOO</div></div>
<div class="fx" style="left:66px;top:175px;width:41px;height:25px"><div class="m" style="left:1px;top:2px">7</div></div>
<div class="hl" style="left:107px;top:199px;width:403px"></div>
<div class="m" style="left:109px;top:178px">Weißbrot-Weizenbrot</div>
<div class="m" style="left:358px;top:178px;width:50px;text-align:right;background:#fff">235.4</div>
<div class="m" style="left:434px;top:178px;width:50px;text-align:right">39.1</div>
<div class="fx" style="left:0px;top:200px;width:66px;height:25px"><div class="m" style="left:1px;top:2px">B6O1O11</div></div>
<div class="fx" style="left:66px;top:200px;width:41px;height:25px"><div class="m" style="left:1px;top:2px">13</div></div>
<div class="hl" style="left:107px;top:224px;width:403px"></div>
<div class="m" style="left:109px;top:203px">Knäckebrot</div>
<div class="m" style="left:358px;top:203px;width:50px;text-align:right;background:#fff">359.5</div>
<div class="m" style="left:434px;top:203px;width:50px;text-align:right"> 7.O</div>
<div class="fx" style="left:0px;top:225px;width:66px;height:25px"><div class="m" style="left:1px;top:2px">B77O3OO</div></div>
<div class="fx" style="left:66px;top:225px;width:41px;height:25px"><div class="m" style="left:1px;top:2px">14</div></div>
<div class="hl" style="left:107px;top:249px;width:403px"></div>
<div class="m" style="left:109px;top:228px">Grahambrot</div>
<div class="m" style="left:358px;top:228px;width:50px;text-align:right;background:#fff">212.5</div>
<div class="m" style="left:434px;top:228px;width:50px;text-align:right">4O.8</div>
<div class="fx" style="left:0px;top:250px;width:66px;height:25px"><div class="m" style="left:1px;top:2px">B782O11</div></div>
<div class="fx" style="left:66px;top:250px;width:41px;height:25px"><div class="m" style="left:1px;top:2px">17</div></div>
<div class="hl" style="left:107px;top:274px;width:403px"></div>
<div class="m" style="left:109px;top:253px">Fladenbrote</div>
<div class="m" style="left:358px;top:253px;width:50px;text-align:right;background:#fff">235.4</div>
<div class="m" style="left:434px;top:253px;width:50px;text-align:right">39.1</div>
<div class="fx" style="left:0px;top:275px;width:66px;height:25px"><div class="m" style="left:1px;top:2px">LO11211</div></div>
<div class="fx" style="left:66px;top:275px;width:41px;height:25px"><div class="m" style="left:1px;top:2px">434</div></div>
<div class="hl" style="left:107px;top:299px;width:403px"></div>
<div class="m" style="left:109px;top:278px">Brot dunkl mit Johannisbrotkern</div>
<div class="m" style="left:358px;top:278px;width:50px;text-align:right;background:#fff">221.8</div>
<div class="m" style="left:434px;top:278px;width:50px;text-align:right">43.2</div>
<div class="fx" style="left:0px;top:300px;width:66px;height:25px"><div class="m" style="left:1px;top:2px">L131111</div></div>
<div class="fx" style="left:66px;top:300px;width:41px;height:25px"><div class="m" style="left:1px;top:2px">437</div></div>
<div class="hl" style="left:107px;top:324px;width:403px"></div>
<div class="m" style="left:109px;top:303px">Mehlmischung für Brot glutenfre</div>
<div class="m" style="left:358px;top:303px;width:50px;text-align:right;background:#fff">349.2</div>
<div class="m" style="left:434px;top:303px;width:50px;text-align:right">12.5</div>
<div class="fx" style="left:0px;top:325px;width:66px;height:25px"><div class="m" style="left:1px;top:2px">L133O11</div></div>
<div class="fx" style="left:66px;top:325px;width:41px;height:25px"><div class="m" style="left:1px;top:2px">439</div></div>
<div class="hl" style="left:107px;top:349px;width:403px"></div>
<div class="m" style="left:109px;top:328px">Waffel Maisbrot glutenfrei</div>
<div class="m" style="left:358px;top:328px;width:50px;text-align:right;background:#fff">335.3</div>
<div class="m" style="left:434px;top:328px;width:50px;text-align:right">17.4</div>
<div class="vl" style="left:357px;top:25px;height:320px"></div>
<div class="vl" style="left:433px;top:25px;height:320px"></div>
<div class="vl" style="left:509px;top:25px;height:320px"></div>
<div class="a" style="left:107px;top:25px;width:251px;height:25px;border:1px dotted #000"></div>
</div>
<div class="a raised" style="left:135px;top:135px;width:66px;height:24px"></div><div class="m" style="left:135px;top:139px;width:66px;text-align:center"><u>S</u>ort</div>
<div class="a raised" style="left:356px;top:135px;width:88px;height:24px"></div><div class="m" style="left:356px;top:139px;width:88px;text-align:center"><u>F</u>ixieren</div>
<div class="a chk" style="left:647px;top:134px;width:16px;height:335px"></div>
<div class="a chk" style="left:136px;top:469px;width:511px;height:16px"></div>
<div class="a" style="left:647px;top:469px;width:16px;height:16px;background:#d4d0c8"></div>
<div class="sb" style="left:647px;top:134px"></div><div class="ar" style="left:651px;top:140px;border-bottom-color:#000;border-width:0 4px 4px 4px"></div>
<div class="sb" style="left:647px;top:150px"></div>
<div class="sb" style="left:647px;top:453px"></div><div class="ar" style="left:651px;top:459px;border-top-color:#000;border-width:4px 4px 0 4px"></div>
<div class="sb" style="left:136px;top:469px"></div><div class="ar" style="left:141px;top:473px;border-right-color:#000;border-width:4px 4px 4px 0"></div>
<div class="sb" style="left:152px;top:469px"></div>
<div class="sb" style="left:631px;top:469px"></div><div class="ar" style="left:638px;top:473px;border-left-color:#000;border-width:4px 0 4px 4px"></div>
<svg class="a" style="left:650px;top:472px" width="13" height="13" viewBox="0 0 13 13"><g stroke-width="1"><path d="M12 1L1 12M12 5L5 12M12 9L9 12" stroke="#fff" transform="translate(-1,0)"/><path d="M12 2L2 12M12 3L3 12M12 6L6 12M12 7L7 12M12 10L10 12M12 11L11 12" stroke="#808080"/></g></svg>
<div class="a" style="left:0;top:572px;width:800px;height:28px;background:#d4d0c8;border-top:1px solid #d4d0c8;box-shadow:inset 0 1px 0 #fff"></div>
<div class="a" style="left:0;top:573px;width:800px;height:1px;background:#fff"></div>
<div class="a raised" style="left:2px;top:576px;width:52px;height:22px"></div>
<div class="a" id="start" style="left:22px;top:580px;font-weight:bold;font-size:12px;line-height:14px;letter-spacing:0.55px">Start</div>
<div class="a" style="left:60px;top:578px;width:3px;height:18px;box-shadow:inset 1px 1px 0 #fff,inset -1px -1px 0 #808080"></div>
<div class="a" style="left:537px;top:578px;width:3px;height:18px;box-shadow:inset 1px 1px 0 #fff,inset -1px -1px 0 #808080"></div>
<div class="a chk" style="left:544px;top:576px;width:38px;height:22px;box-shadow:inset 1px 1px 0 #404040,inset -1px -1px 0 #fff,inset 2px 2px 0 #808080,inset -2px -2px 0 #d4d0c8"></div>
<svg class="a" style="left:549px;top:580px" width="16" height="16" viewBox="0 0 16 16" shape-rendering="crispEdges"><path fill="#ff0" d="M0 0h16v1h-16zM0 1h1v1h-1zM3 1h10v1h-10zM15 1h1v1h-1zM0 2h1v1h-1zM3 2h10v1h-10zM15 2h1v1h-1zM0 3h1v1h-1zM3 3h1v1h-1zM12 3h1v1h-1zM15 3h1v1h-1zM0 4h1v1h-1zM3 4h1v1h-1zM5 4h6v1h-6zM15 4h1v1h-1zM0 5h1v1h-1zM3 5h1v1h-1zM5 5h4v1h-4zM10 5h1v1h-1zM15 5h1v1h-1zM0 6h1v1h-1zM3 6h1v1h-1zM5 6h6v1h-6zM15 6h1v1h-1zM0 7h1v1h-1zM3 7h1v1h-1zM15 7h1v1h-1zM0 8h1v1h-1zM3 8h1v1h-1zM15 8h1v1h-1zM0 9h1v1h-1zM3 9h1v1h-1zM15 9h1v1h-1zM0 10h1v1h-1zM3 10h1v1h-1zM15 10h1v1h-1zM0 11h1v1h-1zM3 11h1v1h-1zM15 11h1v1h-1zM0 12h1v1h-1zM3 12h1v1h-1zM15 12h1v1h-1zM0 13h1v1h-1zM3 13h1v1h-1zM15 13h1v1h-1zM0 14h1v1h-1zM3 14h10v1h-10zM15 14h1v1h-1zM0 15h16v1h-16z"/><path fill="#a4a418" d="M1 1h2v1h-2zM13 1h2v1h-2zM1 2h2v1h-2zM13 2h2v1h-2zM1 3h2v1h-2zM13 3h2v1h-2zM1 4h2v1h-2zM13 4h2v1h-2zM1 5h2v1h-2zM13 5h2v1h-2zM1 6h2v1h-2zM13 6h2v1h-2zM1 7h2v1h-2zM13 7h2v1h-2zM1 8h2v1h-2zM13 8h2v1h-2zM1 9h2v1h-2zM13 9h2v1h-2zM1 10h2v1h-2zM13 10h2v1h-2zM1 11h2v1h-2zM13 11h2v1h-2zM1 12h2v1h-2zM13 12h2v1h-2zM1 13h2v1h-2zM13 13h2v1h-2zM1 14h2v1h-2zM13 14h2v1h-2z"/><path fill="#000080" d="M4 3h8v1h-8zM4 4h1v1h-1zM11 4h2v1h-2zM4 5h1v1h-1zM9 5h1v1h-1zM11 5h2v1h-2zM4 6h1v1h-1zM11 6h2v1h-2zM4 7h9v1h-9zM4 8h1v1h-1zM12 8h1v1h-1zM4 9h1v1h-1zM12 9h1v1h-1zM4 10h1v1h-1zM12 10h1v1h-1zM4 11h1v1h-1zM12 11h1v1h-1zM4 12h1v1h-1zM12 12h1v1h-1zM4 13h9v1h-9z"/><path fill="#fff" d="M5 8h3v1h-3zM10 8h2v1h-2zM5 9h2v1h-2zM9 9h1v1h-1zM11 9h1v1h-1zM5 10h2v1h-2zM8 10h1v1h-1zM5 11h1v1h-1zM8 11h2v1h-2zM11 11h1v1h-1zM5 12h1v1h-1zM8 12h4v1h-4z"/><path fill="#00c000" d="M8 8h2v1h-2zM7 9h2v1h-2zM7 10h1v1h-1z"/><path fill="#f00" d="M10 9h1v1h-1zM9 10h3v1h-3zM6 11h2v1h-2zM10 11h1v1h-1zM6 12h2v1h-2z"/></svg>
<div class="a" style="left:569px;top:582px;font-weight:bold;font-size:11px;line-height:13px;letter-spacing:-0.4px">E..</div>
<div class="a" style="left:628px;top:576px;width:169px;height:22px;box-shadow:inset 1px 1px 0 #808080,inset -1px -1px 0 #fff"></div>
<div class="a" id="clock" style="left:762px;top:581px;font-size:11px;line-height:13px;letter-spacing:0.3px">23:11</div>
<svg class="a" style="left:71px;top:579px" width="16" height="16" viewBox="0 0 16 16"><rect x="1" y="1" width="13" height="14" rx="3" fill="#2c6cd0"/><rect x="1.5" y="1.5" width="12" height="13" rx="3" fill="none" stroke="#174a9c"/><path d="M4 3h7v10H4z" fill="#f4f4e8"/><path d="M4 3l-1.5 2v8L4 13z" fill="#9cc4f4"/><path d="M6 8h5M8.5 6L6 8l2.500 2" stroke="#203040" stroke-width="1.3" fill="none"/><circle cx="13.500" cy="4.500" r="1.300" fill="#e04020"/></svg>
<svg class="a" style="left:94px;top:579px" width="16" height="16" viewBox="0 0 16 16"><ellipse cx="8" cy="8.500" rx="7.500" ry="3.200" transform="rotate(-28 8 8.500)" fill="none" stroke="#58a8f0" stroke-width="1.400"/><path d="M13.500 9.500H5.500a3 3 0 0 0 5.500 1.500h2.300a5.300 5.300 0 1 1 .2-2zM5.600 7.500h5a2.600 2.600 0 0 0-5 0z" fill="#1c6ce0"/></svg>
<svg class="a" style="left:117px;top:579px" width="16" height="16" viewBox="0 0 16 16"><circle cx="8" cy="8" r="7.300" fill="#f08020"/><path d="M8 8L8 .7A7.300 7.300 0 0 1 15.300 8z" fill="#50a830"/><path d="M8 8L15.300 8A7.300 7.300 0 0 1 8 15.300z" fill="#e8c020"/><path d="M8 8L8 15.300A7.300 7.300 0 0 1 .7 8z" fill="#3070d0"/><circle cx="8" cy="8" r="4.600" fill="#f8f8f8"/><path d="M6.500 5.200L11.200 8L6.500 10.800z" fill="#101010"/><circle cx="8" cy="8" r="7.300" fill="none" stroke="#806040" stroke-width=".6"/></svg>
<svg class="a" style="left:140px;top:579px" width="16" height="16" viewBox="0 0 16 16"><path d="M3 3h9l3 3v3H1V6z" fill="#fff" stroke="#000" stroke-width="1"/><path d="M2 6h12" stroke="#000"/><rect x="1" y="9" width="14" height="4" fill="#a0a000" stroke="#000"/><path d="M3 11h10" stroke="#ff0" stroke-dasharray="1 1"/><path d="M3 13v2M7 13v2M11 13v2M13 13v2" stroke="#000"/><path d="M5 4.500h6" stroke="#000"/></svg>
<svg class="a" style="left:163px;top:579px" width="16" height="16" viewBox="0 0 16 16"><g shape-rendering="crispEdges"><path d="M1 1h3v3h2V1h4v3h2V1h2l1 1v13H1z" fill="#0000c8"/><rect x="1" y="1" width="14" height="14" fill="none" stroke="#000060" stroke-width="1"/><rect x="3" y="7" width="10" height="7" fill="#fff"/><rect x="3" y="8" width="10" height="2" fill="#e00020"/><rect x="3" y="11" width="10" height="2" fill="#e00020"/><rect x="4" y="1" width="2" height="3" fill="#d4d0c8"/><rect x="10" y="1" width="2" height="3" fill="#d4d0c8"/></g></svg>
<svg class="a" style="left:186px;top:579px" width="16" height="16" viewBox="0 0 16 16"><path d="M1.500 1.500h9l3 3v10h-12z" fill="#fff" stroke="#404040"/><rect x="3" y="3" width="5" height="4" fill="#f0f060"/><path d="M3 3h5v4H3z" fill="none" stroke="#c0c040" stroke-dasharray="1 1"/><circle cx="9" cy="10.500" r="4.500" fill="#c8c8d0" stroke="#606060"/><path d="M9 10.500L6 7.500A4.500 4.500 0 0 1 11 6.500z" fill="#40c040"/><circle cx="9" cy="10.500" r="1.200" fill="#fff" stroke="#606060" stroke-width=".6"/><rect x="12" y="8" width="2.500" height="6.500" fill="#202020"/></svg>
<svg class="a" style="left:209px;top:579px" width="16" height="16" viewBox="0 0 16 16"><rect x="3" y="1" width="9" height="14" fill="#4868b0"/><path d="M6.500 4l2-1.500H10v10h1.500v1.500H6v-1.500h1.500V5.500L6.500 6z" fill="#e8c890" stroke="#806030" stroke-width=".5"/><ellipse cx="8" cy="9" rx="8" ry="3" transform="rotate(-30 8 9)" fill="none" stroke="#d01030" stroke-width="1.200"/></svg>
<svg class="a" style="left:232px;top:579px" width="16" height="16" viewBox="0 0 16 16"><circle cx="8" cy="8" r="7.400" fill="#b0b8b8" stroke="#505858"/><circle cx="8" cy="8" r="5.800" fill="#106068"/><path d="M5 11.500V4.500h1.500l3 4.500V4.500H11v7H9.500l-3-4.500v4.500z" fill="#fff"/><path d="M2.500 11.500h11" stroke="#203030" stroke-width="1"/></svg>
<svg class="a" style="left:255px;top:579px" width="16" height="16" viewBox="0 0 16 16"><ellipse cx="8.500" cy="8" rx="5.800" ry="7.300" fill="#d81818"/><ellipse cx="8.500" cy="8" rx="2.500" ry="5.300" fill="#d4d0c8"/><path d="M3.500 5a6 7.300 0 0 1 4-4.200" stroke="#ff9080" stroke-width="1.200" fill="none"/><ellipse cx="8.500" cy="8" rx="5.800" ry="7.300" fill="none" stroke="#901010" stroke-width=".6"/></svg>
<svg class="a" style="left:278px;top:579px" width="16" height="16" viewBox="0 0 16 16"><circle cx="5" cy="5" r="4.200" fill="#30a040"/><path d="M2 4q3-2 5 0t2 2" stroke="#2060d0" stroke-width="1.500" fill="none"/><rect x="5.500" y="3.500" width="9" height="7.500" rx="1" fill="#78b0f0" stroke="#3058a8"/><rect x="7" y="5" width="6" height="4.500" fill="#b8d8ff"/><path d="M8 11h4l1 2.500H7z" fill="#90a0c8"/><rect x="5" y="13.500" width="10" height="1.500" fill="#a8b0d0"/></svg>
<svg class="a" style="left:301px;top:579px" width="16" height="16" viewBox="0 0 16 16"><circle cx="8" cy="8" r="7.500" fill="#d01828"/><path d="M13 2.500L6 5.500l7 2M13 5L7 7.500l6 2.200M13 7.500L8 9.500l5 2" stroke="#fff" stroke-width="1.200" fill="none"/><path d="M2 10.500h12M3 12h10" stroke="#fff" stroke-width=".8"/></svg>
<svg class="a" style="left:324px;top:579px" width="16" height="16" viewBox="0 0 16 16"><path d="M1 4l1-1.500h4L7 4h7.500v9.500H1z" fill="#f0c048" stroke="#a07818"/><path d="M1 13.500L3.500 6.500h12L14.500 13.500z" fill="#ffe088" stroke="#a07818" stroke-width=".7"/><circle cx="7.500" cy="8" r="3.300" fill="#c8e4ff" stroke="#6090c8" stroke-width="1.200"/><path d="M10 10.500l3.500 3.500" stroke="#806040" stroke-width="1.800"/></svg>
<svg class="a" style="left:347px;top:579px" width="16" height="16" viewBox="0 0 16 16"><path d="M3 13.500l10-2.500 2 2-9 2.500z" fill="#8890b0" stroke="#505878" stroke-width=".6"/><path d="M3.500 3.500l3-1 1 9-3 1.500z" fill="#a0a8b8" stroke="#505868" stroke-width=".7"/><path d="M4.500 5l1.800-.5.500 3.500-1.800.7z" fill="#40d040"/><path d="M4 1l.5 2.500" stroke="#606060"/></svg>
<svg class="a" style="left:370px;top:579px" width="16" height="16" viewBox="0 0 16 16"><rect x="0" y="0" width="16" height="16" fill="#808000"/><path d="M2 4V2h2M12 2h2v2M14 12v2h-2M4 14H2v-2" stroke="#fff" stroke-width="1.500" fill="none"/><circle cx="8" cy="8" r="4" fill="none" stroke="#fff" stroke-width="1.500"/><path d="M8 5.500V8.500h2.500" stroke="#fff" stroke-width="1.300" fill="none"/></svg>
<svg class="a" style="left:393px;top:579px" width="16" height="16" viewBox="0 0 16 16"><rect x="0" y="0" width="16" height="16" fill="#d02000"/><rect x=".5" y=".5" width="15" height="15" fill="none" stroke="#40a020" stroke-dasharray="1 1"/><rect x="3" y="3" width="10" height="10" fill="#fff"/><path d="M8 8V4.500A3.500 3.500 0 1 0 11.500 8z" fill="#d02000"/><path d="M9 5h3M9 7h3M9 9h3" stroke="#d02000"/></svg>
<svg class="a" style="left:416px;top:579px" width="16" height="16" viewBox="0 0 16 16"><rect x="0" y="0" width="16" height="16" fill="#0000b0"/><rect x=".5" y=".5" width="15" height="15" fill="none" stroke="#000040" stroke-dasharray="1 1"/><rect x="3" y="3" width="10" height="3" fill="#fff"/><path d="M3 6.500l1.800 7h1.600L8 9l1.600 4.500h1.600l1.800-7h-1.800l-1 4-1.400-4H7.200l-1.400 4-1-4z" fill="#fff"/></svg>
<svg class="a" style="left:439px;top:579px" width="16" height="16" viewBox="0 0 16 16"><rect x="0" y="0" width="16" height="16" fill="#108030"/><rect x=".5" y=".5" width="15" height="15" fill="none" stroke="#003010" stroke-dasharray="1 1"/><rect x="2.500" y="2.500" width="11" height="11" fill="#d8e8d8"/><path d="M3.500 3.500l8.500 9M12 3.500l-8.500 9" stroke="#108030" stroke-width="2.200"/><path d="M9 11.500h4M9 9.500h4" stroke="#fff" stroke-width=".8"/></svg>
<svg class="a" style="left:462px;top:579px" width="16" height="16" viewBox="0 0 16 16"><rect x=".5" y=".5" width="15" height="13.500" rx="2" fill="#d0d0d0" stroke="#606060"/><rect x="2.500" y="2.500" width="11" height="9.500" fill="#f4f4f4"/><circle cx="8" cy="7" r="3" fill="none" stroke="#2080e0" stroke-width="1.600"/><path d="M9 8l2.200 2.500" stroke="#2080e0" stroke-width="1.600"/><rect x="1" y="13" width="14" height="2.500" fill="#303030"/></svg>
<svg class="a" style="left:485px;top:579px" width="16" height="16" viewBox="0 0 16 16"><rect x="4.500" y="1.500" width="10" height="8.500" fill="#d8ecff" stroke="#7098d0"/><rect x="4.500" y="1.500" width="10" height="2" fill="#3060c0"/><rect x="6" y="5" width="7" height="3.500" fill="#a8ccf0"/><circle cx="6.500" cy="8.500" r="3" fill="#e8f4ff" fill-opacity=".8" stroke="#6088c0" stroke-width="1.100"/><path d="M4.500 10.500L1.500 14.500" stroke="#c08840" stroke-width="2"/></svg>
<svg class="a" style="left:630px;top:580px" width="16" height="16" viewBox="0 0 16 16"><rect x="5" y="1" width="9" height="7" fill="#5060a0" stroke="#303868"/><rect x="1" y="4" width="9" height="7.500" fill="#6878b8" stroke="#303868"/><rect x="2.500" y="5.500" width="6" height="4.500" fill="#404880"/><rect x="2" y="12" width="8" height="2" fill="#9098b8"/><path d="M8.500 7.500l7 8M15.500 7.500l-7 8" stroke="#e81020" stroke-width="2.400"/></svg>
<svg class="a" style="left:650px;top:580px" width="16" height="16" viewBox="0 0 16 16"><circle cx="5.500" cy="4" r="2.600" fill="#3080d8"/><path d="M1 13q0-6 4.500-6t4.500 6z" fill="#3080d8"/><circle cx="11" cy="5" r="2.600" fill="#30a848"/><path d="M6.500 14.500q0-6.500 4.500-6.500t4.500 6.500z" fill="#30a848"/><circle cx="11.500" cy="12" r="3.500" fill="#e82010"/><path d="M10 10.500l3 3M13 10.500l-3 3" stroke="#fff" stroke-width="1.200"/></svg>
<svg class="a" style="left:667px;top:580px" width="16" height="16" viewBox="0 0 16 16"><circle cx="8" cy="8" r="7" fill="#fff"/><path d="M8 1A7 7 0 0 0 8 15" stroke="#e01020" stroke-width="1.300" fill="none"/><path d="M8 1A7 7 0 0 1 8 15" stroke="#1030e0" stroke-width="1.300" fill="none"/><path d="M12.500 8A4 4 0 1 0 8.500 12" stroke="#1030e0" stroke-width="1.500" fill="none"/><path d="M10.500 7.500l2 2.500 2-2.500" fill="#1030e0"/><path d="M3.500 8.500A4 4 0 0 0 7.500 12" stroke="#e01020" stroke-width="1.500" fill="none"/><path d="M5.500 9l-2-2.500-2 2.500" fill="#e01020"/><path d="M6 12.500l2.500-1.500-2.500-1.500z" fill="#e01020"/></svg>
<svg class="a" style="left:685px;top:580px" width="16" height="16" viewBox="0 0 16 16"><ellipse cx="6.500" cy="6.500" rx="5.500" ry="6" fill="#909498" stroke="#505458"/><ellipse cx="6" cy="6.500" rx="3" ry="3.800" fill="#606468"/><ellipse cx="5.500" cy="6.500" rx="1.300" ry="1.800" fill="#b0b4b8"/><path d="M11 9q2 2 0 5M13 8q3 3 0 7" stroke="#9098f0" stroke-width="1" fill="none"/></svg>
<svg class="a" style="left:704px;top:580px" width="16" height="16" viewBox="0 0 16 16"><path d="M3 9l8-3 4 3-8 4z" fill="#b0b4c0" stroke="#505868" stroke-width=".7"/><path d="M3 9v3l4 3.500v-2.500z" fill="#707890"/><path d="M7 13l8-4v2.500l-8 4z" fill="#8890a8"/><rect x="8" y="9.500" width="4" height="2" fill="#e8ecf8" transform="skewY(-25) translate(0 4.500)"/><path d="M2 5l5-4v2.500h4.500v4H7V10z" fill="#20b030" stroke="#107018" stroke-width=".6"/></svg>
<svg class="a" style="left:720px;top:580px" width="16" height="16" viewBox="0 0 16 16"><path d="M2 1q1 6 3 8" stroke="#202020" stroke-width="1.200" fill="none"/><path d="M4 8.500q4-2.500 8 .5l2 2.500-3 2.500q-5 0-6-1z" fill="#f4f4f4" stroke="#202020" stroke-width=".9"/><rect x="11" y="11" width="4.500" height="3" fill="#e8d820" stroke="#605000" stroke-width=".6" transform="rotate(20 13 12)"/></svg>
<svg class="a" style="left:741px;top:580px" width="16" height="16" viewBox="0 0 16 16"><path d="M5.500 0h4l2.500 2-2.500 2H5.500L3 2z" fill="#585800"/><rect x="6" y="1.200" width="3" height="1.600" fill="#e8e4c0"/><path d="M3.500 6h6.500v6h2v3.500H3v-3.500h2.500V9H3.500z" fill="#585800"/></svg>
<svg class="a" style="left:4px;top:579px" width="16" height="16" viewBox="0 0 16 16"><path d="M1.500 2.500q3-2 6 0l-1 5q-3-2-6 0z" fill="#e85020"/><path d="M8.500 2.800q3 2 6 0l-1 5q-3 2-6 0z" fill="#50b030"/><path d="M.3 8.800q3-2 6 0l-1 5q-3-2-6 0z" fill="#3070d8"/><path d="M7.300 9.100q3 2 6 0l-1 5q-3 2-6 0z" fill="#f0c020"/></svg>
<div class="a" style="left:608px;top:576px;width:15px;height:11px;background:#d4d0c8;box-shadow:inset -1px -1px 0 #808080,inset 1px 1px 0 #fff"></div><div class="ar" style="left:613px;top:580px;border-bottom-color:#000;border-width:0 3px 3px 3px"></div>
<div class="a" style="left:608px;top:587px;width:15px;height:11px;background:#d4d0c8;box-shadow:inset -1px -1px 0 #808080,inset 1px 1px 0 #fff"></div><div class="ar" style="left:613px;top:591px;border-top-color:#000;border-width:3px 3px 0 3px"></div>
</div></body></html>
